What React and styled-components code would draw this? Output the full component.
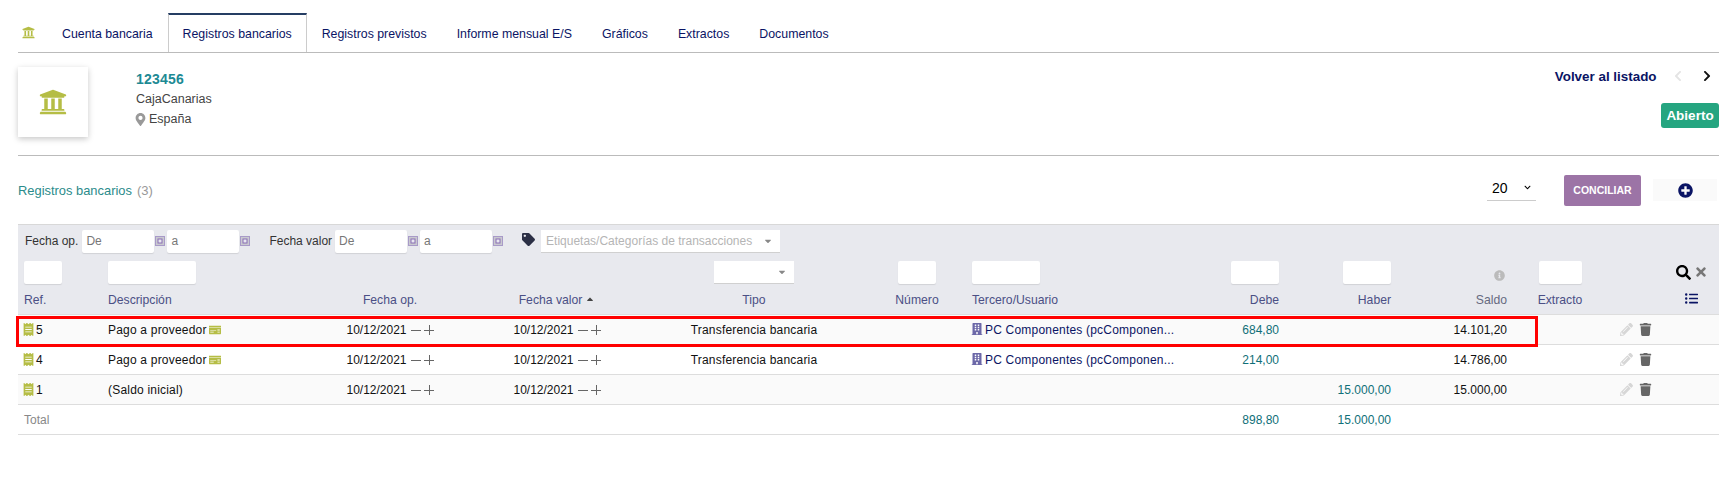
import React from "react";
import styled, { createGlobalStyle } from "styled-components";
import {
  FaUniversity, FaMapMarkerAlt, FaTag, FaSearch, FaTimes, FaInfoCircle, FaListUl,
  FaPencilAlt, FaTrash, FaPlusCircle, FaBuilding, FaChevronLeft, FaChevronRight,
  FaReceipt, FaMoneyCheck, FaCaretDown, FaCaretUp, FaChevronDown,
} from "react-icons/fa";

const Global = createGlobalStyle`
  html, body { margin: 0; padding: 0; background: #fff; }
  body { font-family: "Liberation Sans", Arial, sans-serif; font-size: 12px; color: #111; }
`;

const Page = styled.div`
  padding: 13px 4px 0 18px;
  height: 479px;
  overflow: hidden;
`;

const Tabs = styled.nav`
  display: flex;
  align-items: stretch;
  height: 40px;
  box-sizing: border-box;
  border-bottom: 1px solid #bbb;
`;
const TabIcon = styled.div`
  display: flex;
  align-items: center;
  width: 29px;
  padding-left: 4px;
  box-sizing: border-box;
  color: #b5bd45;
  font-size: 13px;
`;
const Tab = styled.a`
  display: flex;
  align-items: center;
  padding: 0 14px;
  box-sizing: border-box;
  color: #0a1464;
  font-size: 12.35px;
  white-space: nowrap;
  border-top: 2px solid ${(p) => (p.$active ? "#253d63" : "transparent")};
  border-left: 1px solid ${(p) => (p.$active ? "#ccc" : "transparent")};
  border-right: 1px solid ${(p) => (p.$active ? "#ccc" : "transparent")};
`;

const Banner = styled.section`
  display: flex;
  height: 88px;
  border-bottom: 1px solid #bbb;
  padding-top: 14px;
`;
const LogoCard = styled.div`
  width: 70px;
  height: 70px;
  display: flex;
  align-items: center;
  justify-content: center;
  background: #fff;
  box-shadow: 0 2px 6px rgba(0, 0, 0, 0.22);
  color: #b5bd45;
  font-size: 28px;
`;
const Identity = styled.div`
  margin-left: 48px;
  display: flex;
  flex-direction: column;
`;
const AccountRef = styled.div`
  color: #1d8a94;
  font-weight: 700;
  font-size: 14px;
  letter-spacing: 0.2px;
  line-height: 20px;
  margin-top: 2px;
`;
const InfoLine = styled.div`
  color: #444;
  font-size: 12.5px;
  line-height: 20px;
  display: flex;
  align-items: center;
  gap: 2px;
`;
const PinIcon = styled(FaMapMarkerAlt)`
  color: #999;
  font-size: 13px;
  margin-left: -2px;
`;
const BannerRight = styled.div`
  margin-left: auto;
  display: flex;
  flex-direction: column;
  align-items: flex-end;
`;
const BackRow = styled.div`
  display: flex;
  align-items: center;
  height: 16px;
  margin-top: 1px;
  margin-bottom: 19px;
  font-weight: 700;
  font-size: 13.4px;
  color: #0a1464;
`;
const NavLeft = styled(FaChevronLeft)`
  color: #e4e4e4;
  font-size: 12px;
  margin-left: 15.5px;
`;
const NavRight = styled(FaChevronRight)`
  color: #111;
  font-size: 12px;
  margin-left: 17px;
  margin-right: 6px;
`;
const StatusBadge = styled.div`
  background: #25a580;
  color: #fff;
  font-weight: 700;
  font-size: 13.5px;
  height: 25px;
  width: 58px;
  display: flex;
  align-items: center;
  justify-content: center;
  border-radius: 3px;
`;

const ListHeader = styled.div`
  display: flex;
  align-items: center;
  height: 68px;
`;
const ListTitle = styled.div`
  color: #2b8b8b;
  font-size: 12.9px;
  margin-top: 1px;
`;
const Count = styled.span`
  color: #999;
  font-size: 13px;
  margin-left: 5px;
`;
const ListTools = styled.div`
  margin-left: auto;
  display: flex;
  align-items: center;
  padding-right: 2px;
`;
const PageSize = styled.div`
  width: 49px;
  height: 26px;
  box-sizing: border-box;
  margin-bottom: 4px;
  padding: 0 5px;
  border-bottom: 1px solid #ccc;
  display: flex;
  align-items: center;
  justify-content: space-between;
  font-size: 14px;
  color: #000;
`;
const Conciliar = styled.button`
  margin-left: 28px;
  width: 77px;
  height: 31px;
  border: 0;
  padding: 0;
  background: #9c74a6;
  color: #fff;
  font: 700 10.5px "Liberation Sans", Arial, sans-serif;
  border-radius: 2px;
`;
const AddBox = styled.div`
  margin-left: 12px;
  width: 64px;
  height: 22px;
  background: #fafafa;
  color: #0a1464;
  display: flex;
  align-items: center;
  justify-content: center;
  font-size: 15px;
`;

const TableWrap = styled.div`
  position: relative;
`;
const Table = styled.table`
  width: 1701px;
  table-layout: fixed;
  border-collapse: collapse;
  border-top: 1px solid #d8d8d8;
`;
const HeadRow = styled.tr`
  height: ${(p) => p.$h}px;
  background: #e8e9ee;
`;
const FilterCell = styled.td`
  padding: 0;
  text-align: ${(p) => p.$align || "left"};
  vertical-align: middle;
  padding-left: ${(p) => p.$pl || 0}px;
  padding-right: ${(p) => p.$pr || 0}px;
`;
const FilterBar = styled.div`
  display: flex;
  align-items: center;
  padding-left: 7px;
`;
const FilterLabel = styled.span`
  color: #333;
  font-size: 12px;
  margin-right: ${(p) => p.$mr || 4}px;
  white-space: nowrap;
`;
const TextInput = styled.div`
  display: ${(p) => (p.$inline ? "inline-flex" : "flex")};
  align-items: center;
  width: ${(p) => p.$w}px;
  height: 23px;
  box-sizing: border-box;
  padding-left: 4px;
  background: #fff;
  border-radius: 2px;
  box-shadow: 0 1px 1px rgba(0, 0, 0, 0.1);
  color: #777;
  font-size: 12px;
  vertical-align: middle;
`;
const CalIcon = styled.svg`
  width: 10px;
  height: 10px;
  margin: 0 ${(p) => p.$mr ?? 2}px 0 1px;
  flex: none;
`;
const Cal = (p) => (
  <CalIcon viewBox="0 0 10 10" {...p}>
    <rect x="0" y="0" width="10" height="10" fill="#c9c9cf" />
    <rect x="0.5" y="0.5" width="9" height="9" fill="none" stroke="#a89ac8" />
    <rect x="3" y="3" width="4" height="4" fill="#e8e8f0" stroke="#8a6fb5" strokeWidth="1" />
  </CalIcon>
);
const TagIcon = styled(FaTag)`
  color: #2b2f45;
  font-size: 13px;
  margin: -3px 6px 0 19px;
  flex: none;
`;
const SelectBox = styled.div`
  display: ${(p) => (p.$inline ? "inline-flex" : "flex")};
  align-items: center;
  justify-content: space-between;
  width: ${(p) => p.$w}px;
  height: 23px;
  box-sizing: border-box;
  padding: 0 7px 0 5px;
  background: #fff;
  border-bottom: 1px solid #d0d0d0;
  color: #b5b5b5;
  font-size: 12px;
  vertical-align: middle;
`;
const Caret = styled(FaCaretDown)`
  color: #888;
  font-size: 10px;
`;
const HeaderCell = styled.th`
  font-weight: 400;
  font-size: 12.2px;
  padding: 0 ${(p) => p.$pr ?? 0}px 0 ${(p) => p.$pl ?? 0}px;
  text-align: ${(p) => p.$align || "left"};
  color: ${(p) => (p.$muted ? "#666a80" : "#4b4f85")};
  vertical-align: middle;
  white-space: nowrap;
`;
const SortUp = styled(FaCaretUp)`
  font-size: 10px;
  color: #444;
  margin-left: 3px;
  vertical-align: 0;
`;
const Row = styled.tr`
  height: ${(p) => p.$h || 30}px;
  background: ${(p) => (p.$odd ? "#fafafa" : "#fff")};
  border-top: 1px solid #ddd;
  border-bottom: 1px solid #ddd;
`;
const Cell = styled.td`
  padding: 0 ${(p) => p.$pr ?? 0}px 0 ${(p) => p.$pl ?? 0}px;
  text-align: ${(p) => p.$align || "left"};
  color: ${(p) => (p.$amount ? "#0f6f78" : p.$muted ? "#888" : "#111")};
  font-size: 12px;
  letter-spacing: ${(p) => (p.$wide ? "0.2px" : "0")};
  white-space: nowrap;
  vertical-align: middle;
`;
const RefIcon = styled(FaReceipt)`
  color: #b5bd45;
  font-size: 13px;
  margin-left: -2px;
  margin-right: 1px;
  vertical-align: -2px;
`;
const CardIcon = styled(FaMoneyCheck)`
  color: #b5bd45;
  font-size: 12px;
  margin-left: 2px;
  vertical-align: -2px;
`;
const ThirdIcon = styled(FaBuilding)`
  color: #6c68a8;
  font-size: 12px;
  margin-left: -1px;
  margin-right: 2px;
  vertical-align: -1px;
`;
const ThirdName = styled.span`
  color: #0a1464;
`;
const StepSvg = styled.svg`
  width: 10px;
  height: 10px;
  margin-left: ${(p) => p.$ml}px;
  vertical-align: -1px;
  stroke: #666;
  stroke-width: 1;
  fill: none;
`;
const PencilIcon = styled(FaPencilAlt)`
  color: #d6d6d6;
  font-size: 13px;
  vertical-align: -2px;
`;
const TrashIcon = styled(FaTrash)`
  color: #666;
  font-size: 13px;
  margin-left: 6px;
  vertical-align: -2px;
`;
const ToolRow = styled.div`
  display: flex;
  justify-content: flex-end;
  align-items: center;
  padding-right: 11px;
`;
const SearchIcon = styled(FaSearch)`
  color: #000;
  font-size: 15px;
`;
const ClearIcon = styled(FaTimes)`
  color: #777;
  font-size: 14px;
  margin-left: 3px;
`;
const ListIcon = styled(FaListUl)`
  color: #0a1464;
  font-size: 13px;
`;
const InfoIcon = styled(FaInfoCircle)`
  color: #bbb;
  font-size: 11px;
  margin-top: 9px;
`;
const Highlight = styled.div`
  position: absolute;
  left: -2px;
  top: 92px;
  width: 1522px;
  height: 31px;
  box-sizing: border-box;
  border: 3px solid #f00;
  pointer-events: none;
`;

const widths = [84, 228, 120, 214, 198, 110, 218, 95, 112, 116, 94, 112];

const DateCell = ({ children }) => (
  <>
    {children}
    <StepSvg $ml={4} viewBox="0 0 10 10"><path d="M0 5.5h10" /></StepSvg>
    <StepSvg $ml={3} viewBox="0 0 10 10"><path d="M0 5.5h10M5.5 0v10" /></StepSvg>
  </>
);

const Actions = () => (
  <Cell $pl={13}>
    <PencilIcon />
    <TrashIcon />
  </Cell>
);

const rows = [
  { ref: "5", desc: "Pago a proveedor", card: true, tipo: "Transferencia bancaria", third: "PC Componentes (pcComponen...", debe: "684,80", saldo: "14.101,20", odd: true },
  { ref: "4", desc: "Pago a proveedor", card: true, tipo: "Transferencia bancaria", third: "PC Componentes (pcComponen...", debe: "214,00", saldo: "14.786,00" },
  { ref: "1", desc: "(Saldo inicial)", haber: "15.000,00", saldo: "15.000,00", odd: true },
];

export default function App() {
  return (
    <Page>
      <Global />
      <Tabs>
        <TabIcon><FaUniversity /></TabIcon>
        <Tab>Cuenta bancaria</Tab>
        <Tab $active>Registros bancarios</Tab>
        <Tab>Registros previstos</Tab>
        <Tab>Informe mensual E/S</Tab>
        <Tab>Gráficos</Tab>
        <Tab>Extractos</Tab>
        <Tab>Documentos</Tab>
      </Tabs>
      <Banner>
        <LogoCard><FaUniversity /></LogoCard>
        <Identity>
          <AccountRef>123456</AccountRef>
          <InfoLine>CajaCanarias</InfoLine>
          <InfoLine><PinIcon />España</InfoLine>
        </Identity>
        <BannerRight>
          <BackRow>
            Volver al listado
            <NavLeft />
            <NavRight />
          </BackRow>
          <StatusBadge>Abierto</StatusBadge>
        </BannerRight>
      </Banner>
      <ListHeader>
        <ListTitle>Registros bancarios<Count>(3)</Count></ListTitle>
        <ListTools>
          <PageSize>20 <FaChevronDown size={7} /></PageSize>
          <Conciliar>CONCILIAR</Conciliar>
          <AddBox><FaPlusCircle /></AddBox>
        </ListTools>
      </ListHeader>
      <TableWrap>
        <Table>
          <colgroup>
            {widths.map((w, i) => <col key={i} style={{ width: w }} />)}
          </colgroup>
          <thead>
            <HeadRow $h={33}>
              <FilterCell colSpan={12}>
                <FilterBar>
                  <FilterLabel $mr={4}>Fecha op.</FilterLabel>
                  <TextInput $w={72}>De</TextInput><Cal />
                  <TextInput $w={72}>a</TextInput><Cal $mr={19} />
                  <FilterLabel $mr={3}>Fecha valor</FilterLabel>
                  <TextInput $w={72}>De</TextInput><Cal />
                  <TextInput $w={72}>a</TextInput><Cal $mr={0} />
                  <TagIcon />
                  <SelectBox $w={239}>Etiquetas/Categorías de transacciones<Caret /></SelectBox>
                </FilterBar>
              </FilterCell>
            </HeadRow>
            <HeadRow $h={29}>
              <FilterCell $pl={6}><TextInput $w={38} /></FilterCell>
              <FilterCell $pl={6}><TextInput $w={88} /></FilterCell>
              <FilterCell />
              <FilterCell />
              <FilterCell $align="center" $pr={18}><SelectBox $inline $w={80}><span /><Caret /></SelectBox></FilterCell>
              <FilterCell $align="center"><TextInput $inline $w={38} /></FilterCell>
              <FilterCell><TextInput $w={68} /></FilterCell>
              <FilterCell $align="right" $pr={6}><TextInput $inline $w={48} /></FilterCell>
              <FilterCell $align="right" $pr={6}><TextInput $inline $w={48} /></FilterCell>
              <FilterCell $align="right" $pr={8}><InfoIcon /></FilterCell>
              <FilterCell $align="center"><TextInput $inline $w={43} /></FilterCell>
              <FilterCell><ToolRow><SearchIcon /><ClearIcon /></ToolRow></FilterCell>
            </HeadRow>
            <HeadRow $h={28}>
              <HeaderCell $pl={6}>Ref.</HeaderCell>
              <HeaderCell $pl={6}>Descripción</HeaderCell>
              <HeaderCell $align="center">Fecha op.</HeaderCell>
              <HeaderCell $align="center">Fecha valor<SortUp /></HeaderCell>
              <HeaderCell $align="center" $pr={18}>Tipo</HeaderCell>
              <HeaderCell $align="center">Número</HeaderCell>
              <HeaderCell>Tercero/Usuario</HeaderCell>
              <HeaderCell $align="right" $pr={6}>Debe</HeaderCell>
              <HeaderCell $align="right" $pr={6}>Haber</HeaderCell>
              <HeaderCell $align="right" $pr={6} $muted>Saldo</HeaderCell>
              <HeaderCell $align="center">Extracto</HeaderCell>
              <HeaderCell $align="right" $pr={21}><ListIcon /></HeaderCell>
            </HeadRow>
          </thead>
          <tbody>
            {rows.map((r) => (
              <Row key={r.ref} $odd={r.odd}>
                <Cell $pl={6}><RefIcon />{r.ref}</Cell>
                <Cell $pl={6} $wide>{r.desc}{r.card && <CardIcon />}</Cell>
                <Cell $align="center"><DateCell>10/12/2021</DateCell></Cell>
                <Cell $align="center"><DateCell>10/12/2021</DateCell></Cell>
                <Cell $align="center" $pr={18} $wide>{r.tipo}</Cell>
                <Cell />
                <Cell $wide>{r.third && <><ThirdIcon /><ThirdName>{r.third}</ThirdName></>}</Cell>
                <Cell $align="right" $pr={6} $amount>{r.debe}</Cell>
                <Cell $align="right" $pr={6} $amount>{r.haber}</Cell>
                <Cell $align="right" $pr={6}>{r.saldo}</Cell>
                <Cell />
                <Actions />
              </Row>
            ))}
            <Row>
              <Cell $pl={6} $muted>Total</Cell>
              <Cell /><Cell /><Cell /><Cell /><Cell /><Cell />
              <Cell $align="right" $pr={6} $amount>898,80</Cell>
              <Cell $align="right" $pr={6} $amount>15.000,00</Cell>
              <Cell /><Cell /><Cell />
            </Row>
          </tbody>
        </Table>
        <Highlight />
      </TableWrap>
    </Page>
  );
}
